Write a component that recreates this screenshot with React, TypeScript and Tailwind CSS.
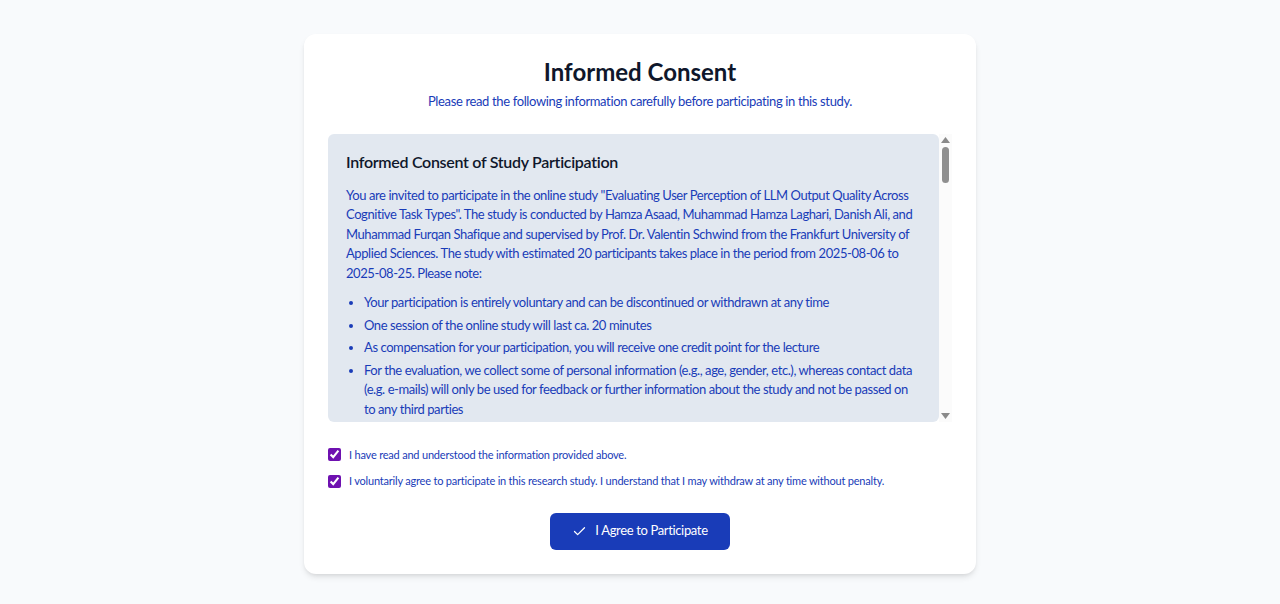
import { Check } from "lucide-react";

const points = [
  "Your participation is entirely voluntary and can be discontinued or withdrawn at any time",
  "One session of the online study will last ca. 20 minutes",
  "As compensation for your participation, you will receive one credit point for the lecture",
  "For the evaluation, we collect some of personal information (e.g., age, gender, etc.), whereas contact data (e.g. e-mails) will only be used for feedback or further information about the study and not be passed on to any third parties",
  "All data will be stored anonymously and used exclusively for scientific purposes",
  "The results of the study may be published in scientific journals or conferences",
];

export default function App() {
  return (
    <div
      className="flex min-h-screen justify-center bg-slate-50 pt-[34px] pb-[30px]"
      style={{ fontFamily: '"Segoe UI", Lato, "Noto Sans", sans-serif' }}
    >
      <div className="h-fit w-full max-w-[672px] rounded-xl bg-white px-6 pt-[22px] pb-6 shadow-md">
        <h1 className="text-center text-[24px] font-bold leading-8 text-slate-900">
          Informed Consent
        </h1>
        <p className="mt-[4px] text-center text-[13px] tracking-[-0.36px] text-blue-800">
          Please read the following information carefully before participating in this study.
        </p>

        <div className="mt-[22px] flex h-[288px]">
          <div className="flex-1 overflow-hidden rounded-md bg-slate-200 px-[18px] pt-[16px] pb-4 text-[13px] leading-[19.5px] tracking-[-0.42px] text-blue-800">
            <h2 className="mb-[12px] text-[16px] font-semibold leading-6 tracking-[-0.3px] text-slate-900">
              Informed Consent of Study Participation
            </h2>
            <p className="mb-[10px]">
              You are invited to participate in the online study "Evaluating User Perception of LLM
              Output Quality Across Cognitive Task Types". The study is conducted by Hamza Asaad,
              Muhammad Hamza Laghari, Danish Ali, and Muhammad Furqan Shafique and supervised by Prof.
              Dr. Valentin Schwind from the Frankfurt University of Applied Sciences. The study with
              estimated 20 participants takes place in the period from 2025-08-06 to 2025-08-25.
              Please note:
            </p>
            <ul className="list-disc space-y-[3px] pl-[18px]">
              {points.map((p, i) => (
                <li key={i}>{p}</li>
              ))}
            </ul>
          </div>
          {/* scrollbar */}
          <div className="flex w-[13px] flex-col items-center justify-between bg-[#fbfbfb] py-[3px]">
            <div className="flex w-full flex-col items-center gap-[4px]">
              <svg width="9" height="6" viewBox="0 0 9 6">
                <path d="M4.5 0L9 6H0z" fill="#8a8a8a" />
              </svg>
              <div className="h-[36px] w-[7px] rounded-full bg-[#8f8f8f]" />
            </div>
            <svg width="9" height="6" viewBox="0 0 9 6">
              <path d="M0 0H9L4.5 6z" fill="#8a8a8a" />
            </svg>
          </div>
        </div>

        <div className="mt-[25px] space-y-[10px] text-[11px] tracking-[-0.2px] text-blue-800">
          <label className="flex items-center gap-[8px]">
            <input type="checkbox" defaultChecked className="m-0 h-[13px] w-[13px] accent-purple-800" />
            <span>I have read and understood the information provided above.</span>
          </label>
          <label className="flex items-center gap-[8px]">
            <input type="checkbox" defaultChecked className="m-0 h-[13px] w-[13px] accent-purple-800" />
            <span>
              I voluntarily agree to participate in this research study. I understand that I may
              withdraw at any time without penalty.
            </span>
          </label>
        </div>

        <div className="mt-[23px] flex justify-center">
          <button
            type="button"
            className="flex h-[37px] w-[180px] items-center justify-center gap-2 rounded-md bg-blue-800 text-[13px] tracking-[-0.35px] text-white"
          >
            <Check size={15} strokeWidth={2} />
            I Agree to Participate
          </button>
        </div>
      </div>
    </div>
  );
}
